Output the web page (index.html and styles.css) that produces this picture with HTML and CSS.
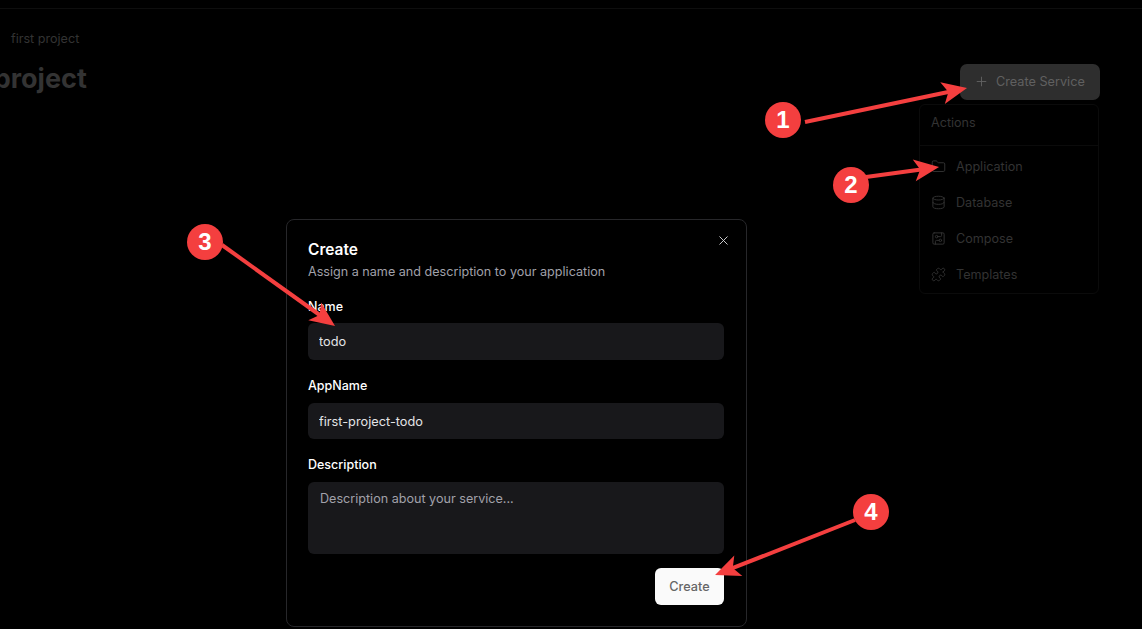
FILE: index.html
```html
<!DOCTYPE html>
<html lang="en">
<head>
    <meta charset="UTF-8">
    <title>first project</title>
    <link rel="stylesheet" href="styles.css">
</head>
<body>
    <div class="topbar"></div>

    <main class="page">
        <div class="breadcrumb">first project</div>
        <div class="page-head">
            <h1>first project</h1>
            <button type="button" class="create-service">
                <svg class="icon" viewBox="0 0 24 24"><path d="M5 12h14"/><path d="M12 5v14"/></svg>
                Create Service
            </button>
        </div>
    </main>

    <!-- Dropdown under the button -->
    <div class="menu">
        <div class="menu-title">Actions</div>
        <ul class="menu-list">
            <li>
                <svg class="icon" viewBox="0 0 24 24"><path d="M20 20a2 2 0 0 0 2-2V8a2 2 0 0 0-2-2h-7.9a2 2 0 0 1-1.69-.9L9.6 3.9A2 2 0 0 0 7.93 3H4a2 2 0 0 0-2 2v13a2 2 0 0 0 2 2Z"/></svg>
                Application
            </li>
            <li>
                <svg class="icon" viewBox="0 0 24 24"><ellipse cx="12" cy="5" rx="9" ry="3"/><path d="M3 5V19A9 3 0 0 0 21 19V5"/><path d="M3 12A9 3 0 0 0 21 12"/></svg>
                Database
            </li>
            <li>
                <svg class="icon" viewBox="0 0 24 24"><rect x="3" y="3" width="18" height="18" rx="2"/><path d="M11 9h4a2 2 0 0 0 2-2V3"/><circle cx="9" cy="9" r="2"/><path d="M7 21v-4a2 2 0 0 1 2-2h4"/><circle cx="15" cy="15" r="2"/></svg>
                Compose
            </li>
            <li>
                <svg class="icon" viewBox="0 0 24 24"><path d="M19.439 7.85c-.049.322.059.648.289.878l1.568 1.568c.47.47.706 1.087.706 1.704s-.235 1.233-.706 1.704l-1.611 1.611a.98.98 0 0 1-.837.276c-.47-.07-.802-.48-.968-.925a2.501 2.501 0 1 0-3.214 3.214c.446.166.855.497.925.968a.979.979 0 0 1-.276.837l-1.61 1.61a2.404 2.404 0 0 1-1.705.707 2.402 2.402 0 0 1-1.704-.706l-1.568-1.568a1.026 1.026 0 0 0-.877-.29c-.493.074-.84.504-1.02.968a2.5 2.5 0 1 1-3.237-3.237c.464-.18.894-.527.967-1.02a1.026 1.026 0 0 0-.289-.877l-1.568-1.568A2.402 2.402 0 0 1 1.998 12c0-.617.236-1.234.706-1.704L4.23 8.77c.24-.24.581-.353.917-.303.515.077.877.528 1.073 1.01a2.5 2.5 0 1 0 3.259-3.259c-.482-.196-.933-.558-1.01-1.073-.05-.336.062-.676.303-.917l1.525-1.525A2.402 2.402 0 0 1 12 1.998c.617 0 1.234.236 1.704.706l1.568 1.568c.23.23.556.338.877.29.493-.074.84-.504 1.02-.968a2.5 2.5 0 1 1 3.237 3.237c-.464.18-.894.527-.967 1.02Z"/></svg>
                Templates
            </li>
        </ul>
    </div>

    <!-- Create dialog -->
    <form class="dialog">
        <svg class="dialog-close" viewBox="0 0 24 24"><path d="M18 6 6 18"/><path d="m6 6 12 12"/></svg>
        <h2>Create</h2>
        <p class="dialog-desc">Assign a name and description to your application</p>
        <div class="field">
            <label for="name">Name</label>
            <input type="text" id="name" value="todo">
        </div>
        <div class="field">
            <label for="appName">AppName</label>
            <input type="text" id="appName" value="first-project-todo">
        </div>
        <div class="field">
            <label for="description">Description</label>
            <textarea id="description" placeholder="Description about your service..."></textarea>
        </div>
        <div class="dialog-foot">
            <button type="button" class="submit">Create</button>
        </div>
    </form>

    <!-- Tutorial annotations drawn over the screenshot -->
    <svg class="notes" viewBox="0 0 1142 629">
        <defs>
            <marker id="head" markerUnits="userSpaceOnUse" markerWidth="28" markerHeight="24" refX="8" refY="12" orient="auto">
                <path d="M1 1 L26 12 L1 23 L7 12 Z"/>
            </marker>
        </defs>
        <line x1="805" y1="122" x2="949.4" y2="91.7" marker-end="url(#head)"/>
        <line x1="866" y1="177" x2="921.2" y2="169.4" marker-end="url(#head)"/>
        <line x1="222" y1="245" x2="320.4" y2="315.5" marker-end="url(#head)"/>
        <line x1="855" y1="520" x2="731.8" y2="568.4" marker-end="url(#head)"/>
        <circle cx="783" cy="120" r="18"/>
        <circle cx="851" cy="185" r="18"/>
        <circle cx="205" cy="242" r="18"/>
        <circle cx="871" cy="512" r="18"/>
        <text x="783" y="128">1</text>
        <text x="851" y="193">2</text>
        <text x="205" y="250">3</text>
        <text x="871" y="520">4</text>
    </svg>
</body>
</html>
```

FILE: styles.css
```css
* {
    box-sizing: border-box;
}
html, body {
    height: 100%;
}
body {
    margin: 0;
    position: relative;
    overflow: hidden;
    background-color: #000;
    color: #fff;
    font-family: Inter, "Liberation Sans", sans-serif;
    font-size: 12.6px;
}
.icon {
    width: 15px;
    height: 15px;
    flex: none;
    fill: none;
    stroke: currentColor;
    stroke-width: 1.5;
    stroke-linecap: round;
    stroke-linejoin: round;
}
.topbar {
    height: 9px;
    border-bottom: 1px solid #0e0e0e;
}
.page {
    padding: 22px 42px 0 11px;
}
.breadcrumb {
    color: #333;
    line-height: 16px;
}
.page-head {
    display: flex;
    justify-content: space-between;
    align-items: flex-start;
    margin-top: 9px;
}
h1 {
    margin: 0 0 0 -78px;
    padding-top: 8px;
    color: #333;
    font-size: 27px;
    font-weight: 700;
    line-height: 30px;
}
.create-service {
    display: flex;
    align-items: center;
    gap: 7px;
    width: 140px;
    height: 36px;
    margin-top: 8px;
    padding: 0 14px 2px;
    border: none;
    border-radius: 7px;
    background-color: #2e2e2e;
    color: #606060;
    font-family: inherit;
    font-size: 12.7px;
    white-space: nowrap;
}
.menu {
    position: absolute;
    top: 104px;
    left: 919px;
    width: 180px;
    height: 190px;
    border: 1px solid #0b0b0b;
    border-radius: 6px;
    color: #333;
}
.menu-title {
    height: 41px;
    padding: 10px 11px 0;
    border-bottom: 1px solid #0b0b0b;
    line-height: 16px;
}
.menu-list {
    list-style: none;
    margin: 0;
    padding: 2px 0 0 11px;
}
.menu-list li {
    display: flex;
    align-items: center;
    gap: 10px;
    height: 36px;
}
.dialog {
    position: absolute;
    top: 219px;
    left: 286px;
    width: 461px;
    height: 408px;
    padding: 21px 22px 21px 21px;
    border: 1px solid #27272a;
    border-radius: 8px;
    background-color: #000;
}
.dialog-close {
    position: absolute;
    top: 13px;
    right: 15px;
    width: 15px;
    height: 15px;
    fill: none;
    stroke: #d4d4d8;
    stroke-width: 1.5;
    stroke-linecap: round;
}
h2 {
    margin: 0;
    font-size: 15.5px;
    font-weight: 600;
    line-height: 18px;
}
.dialog-desc {
    margin: 4px 0 0;
    color: #a1a1aa;
    line-height: 18px;
}
.field {
    margin-top: 18px;
}
label {
    display: block;
    margin-bottom: 9px;
    font-size: 12.5px;
    font-weight: 500;
    line-height: 15px;
}
.field + .field label {
    margin-bottom: 10px;
}
input, textarea {
    display: block;
    width: 100%;
    padding: 0 11px;
    border: none;
    border-radius: 6px;
    background-color: #18181b;
    color: #e4e4e7;
    font-family: inherit;
    font-size: 12.75px;
    outline: none;
}
input {
    height: 37px;
}
.field + .field input {
    height: 36px;
}
textarea {
    height: 72px;
    padding: 9px 12px;
    font-size: 12.6px;
    line-height: 16px;
    resize: none;
}
textarea::placeholder {
    color: #a1a1aa;
    opacity: 1;
}
.dialog-foot {
    display: flex;
    justify-content: flex-end;
    margin-top: 14px;
}
.submit {
    width: 69px;
    height: 37px;
    border: none;
    border-radius: 6px;
    background-color: #fafafa;
    color: #666;
    font-family: inherit;
    font-size: 12.7px;
    font-weight: 500;
}
.notes {
    position: absolute;
    top: 0;
    left: 0;
    width: 1142px;
    height: 629px;
}
.notes line {
    stroke: #f43f3f;
    stroke-width: 4;
}
.notes marker path, .notes circle {
    fill: #f43f3f;
}
.notes text {
    fill: #fff;
    font-family: "Liberation Sans", sans-serif;
    font-size: 24px;
    font-weight: 700;
    text-anchor: middle;
}
```
